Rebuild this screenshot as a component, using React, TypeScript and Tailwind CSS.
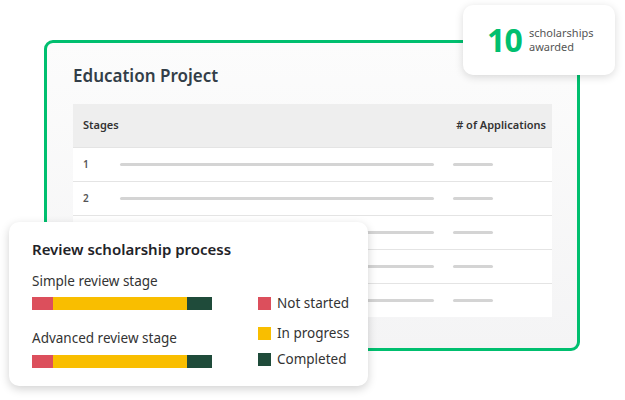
const rows = [1, 2, 3, 4, 5];

const Bar = () => (
  <div className="flex h-[13px] w-[180px]">
    <div className="w-[21px] bg-[#dc4f5c]" />
    <div className="w-[134px] bg-[#f9be00]" />
    <div className="w-[25px] bg-[#1f4b3a]" />
  </div>
);

const Legend = ({ color, label, className }: { color: string; label: string; className: string }) => (
  <div className={`flex h-[13px] items-center gap-[6px] ${className}`}>
    <div className={`h-[13px] w-[13px] ${color}`} />
    <span className="text-[13.5px] leading-none text-[#333]">{label}</span>
  </div>
);

export default function App() {
  return (
    <div
      className="relative h-[400px] w-[625px] overflow-hidden bg-white"
      style={{ fontFamily: '"Noto Sans", "Liberation Sans", sans-serif' }}
    >
      <div className="ml-[44px] mt-[40px] flex h-[311px] w-[536px] flex-col rounded-[9px] border-[3px] border-[#00bf6f] bg-gradient-to-b from-[#fcfcfc] to-[#f4f4f5] pl-[26px] pr-[25px]">
        <h1 className="mt-[20px] h-[25px] text-[17px] font-semibold leading-[25px] text-[#333e48]">
          Education Project
        </h1>
        <div className="mt-[16px] flex flex-col">
          <div className="flex h-[43px] items-center justify-between bg-[#eeeeee] pl-[10px] pr-[6px] text-[11px] font-semibold text-[#333]">
            <span>Stages</span>
            <span>{"# of Applications"}</span>
          </div>
          {rows.map((n) => (
            <div
              key={n}
              className="flex h-[34px] items-center border-t border-[#e4e4e4] bg-white pl-[10px]"
            >
              <span className="w-[37px] text-[10px] font-semibold text-[#555]">{n}</span>
              <div className="h-[3px] w-[314px] rounded-full bg-[#d4d4d4]" />
              <div className="ml-[19px] h-[3px] w-[40px] rounded-full bg-[#d4d4d4]" />
            </div>
          ))}
        </div>
      </div>

      <div className="absolute left-[463px] top-[5px] flex h-[70px] w-[152px] items-center gap-[7px] rounded-[10px] bg-white pl-[24px] shadow-[0_2px_8px_rgba(0,0,0,0.15)]">
        <span className="text-[32px] font-bold leading-none tracking-tight text-[#00bf6f]">10</span>
        <span className="text-[11px] leading-[14px] text-[#555]">
          scholarships
          <br />
          awarded
        </span>
      </div>

      <div className="absolute left-[9px] top-[222px] flex h-[164px] w-[359px] rounded-[10px] bg-white pl-[23px] pt-[16px] shadow-[0_3px_10px_rgba(0,0,0,0.18)]">
        <div className="flex w-[226px] flex-col">
          <h2 className="text-[15px] font-semibold leading-[22px] text-[#1f2328]">
            Review scholarship process
          </h2>
          <span className="mt-[12px] text-[13.5px] leading-[18px] text-[#333]">Simple review stage</span>
          <div className="mt-[7px]">
            <Bar />
          </div>
          <span className="mt-[19px] text-[13.5px] leading-[18px] text-[#333]">Advanced review stage</span>
          <div className="mt-[8px]">
            <Bar />
          </div>
        </div>
        <div className="mt-[59px] flex flex-col">
          <Legend color="bg-[#dc4f5c]" label="Not started" className="" />
          <Legend color="bg-[#f9be00]" label="In progress" className="mt-[17px]" />
          <Legend color="bg-[#1f4b3a]" label="Completed" className="mt-[13px]" />
        </div>
      </div>
    </div>
  );
}
